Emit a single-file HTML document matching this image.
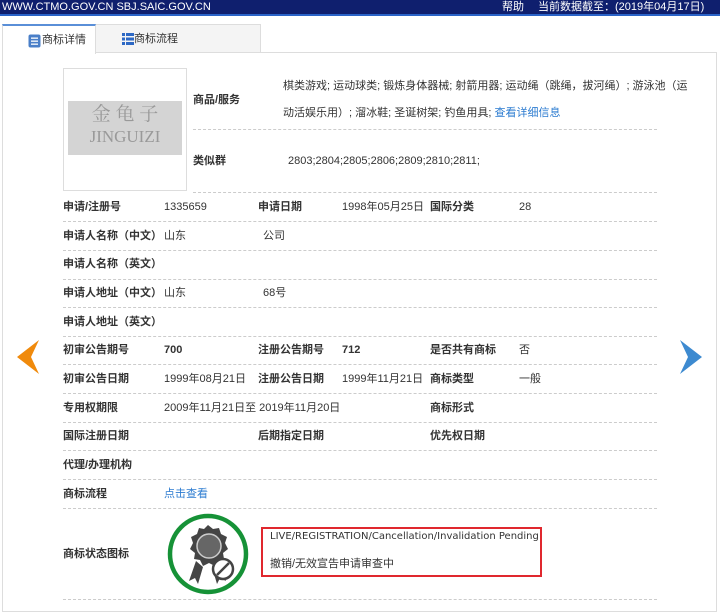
<!DOCTYPE html>
<html><head><meta charset="utf-8"><style>
*{margin:0;padding:0;box-sizing:border-box}
body{width:720px;height:603px;background:#fff;font-family:"Liberation Sans","Noto Sans CJK SC",sans-serif;font-size:11px;color:#333;position:relative;overflow:hidden}
.hdr{position:absolute;left:0;top:0;width:720px;height:16px;background:#0f1f6e;border-bottom:2px solid #2a63c8;color:#fff;font-size:11px;line-height:14px}
.abs{position:absolute;white-space:nowrap;line-height:14px}
.tab{position:absolute;top:24px;height:29px;border:1px solid #ddd;border-bottom:none;line-height:28px;font-size:11px}
.tab .abs{line-height:28px}
.box{position:absolute;left:2px;top:52px;width:715px;height:560px;border:1px solid #ddd}
.dash{position:absolute;left:63px;width:594px;border-top:1px dashed #ccc}
.b{font-weight:bold;color:#333}
.lk{color:#2b7bd0}
</style></head><body>
<div class="hdr"><span class="abs" style="left:2px;top:0">WWW.CTMO.GOV.CN SBJ.SAIC.GOV.CN</span><span class="abs" style="left:502px;top:0">帮助</span><span class="abs" style="left:538px;top:0">当前数据截至：(2019年04月17日)</span></div>
<div class="tab" style="left:2px;width:94px;background:#fff;border-top:2px solid #5a8fd8;z-index:2;height:30px"><svg style="position:absolute;left:25px;top:8px" width="13" height="14"><rect x="0.5" y="0.5" width="12" height="13" rx="2" fill="#4a7fc8"/><rect x="3" y="3.5" width="7" height="1.3" fill="#fff"/><rect x="3" y="6.5" width="7" height="1.3" fill="#fff"/><rect x="3" y="9.5" width="7" height="1.3" fill="#fff"/></svg><span class="abs" style="left:39px;top:0">商标详情</span></div>
<div class="tab" style="left:95px;width:166px;background:#f4f4f4"><svg style="position:absolute;left:26px;top:8px" width="12" height="12" fill="#2d68c4"><rect x="0" y="0" width="3" height="3"/><rect x="4" y="0" width="8" height="3"/><rect x="0" y="4.5" width="3" height="3"/><rect x="4" y="4.5" width="8" height="3"/><rect x="0" y="9" width="3" height="3"/><rect x="4" y="9" width="8" height="3"/></svg><span class="abs" style="left:38px;top:0">商标流程</span></div>
<div class="box"></div>
<div class="abs" style="left:63px;top:68px;width:124px;height:123px;border:1px solid #ddd"></div>
<div class="abs" style="left:68px;top:101px;width:114px;height:54px;background:#d4d4d4;color:#999;font-family:'Liberation Serif','Noto Serif CJK SC',serif;text-align:center;line-height:22px;font-size:19px;padding-top:3px">金 龟 子<br><span style="font-size:17px">JINGUIZI</span></div>
<span class="abs b" style="left:193px;top:93px">商品/服务</span>
<span class="abs" style="left:283px;top:79px">棋类游戏; 运动球类; 锻炼身体器械; 射箭用器; 运动绳（跳绳，拔河绳）; 游泳池（运</span>
<span class="abs" style="left:283px;top:106px">动活娱乐用）; 溜冰鞋; 圣诞树架; 钓鱼用具; <span class="lk">查看详细信息</span></span>
<div class="dash" style="left:193px;width:464px;top:129px"></div>
<span class="abs b" style="left:193px;top:154px">类似群</span>
<span class="abs" style="left:288px;top:154px">2803;2804;2805;2806;2809;2810;2811;</span>
<div class="dash" style="left:193px;width:464px;top:192px"></div>

<span class="abs b" style="left:63px;top:200px">申请/注册号</span><span class="abs" style="left:164px;top:200px">1335659</span><span class="abs b" style="left:258px;top:200px">申请日期</span><span class="abs" style="left:342px;top:200px">1998年05月25日</span><span class="abs b" style="left:430px;top:200px">国际分类</span><span class="abs" style="left:519px;top:200px">28</span>
<div class="dash" style="top:221px"></div>
<span class="abs b" style="left:63px;top:229px">申请人名称（中文）</span><span class="abs" style="left:164px;top:229px">山东　　　　　　　公司</span>
<div class="dash" style="top:250px"></div>
<span class="abs b" style="left:63px;top:257px">申请人名称（英文）</span>
<div class="dash" style="top:279px"></div>
<span class="abs b" style="left:63px;top:286px">申请人地址（中文）</span><span class="abs" style="left:164px;top:286px">山东　　　　　　　68号</span>
<div class="dash" style="top:307px"></div>
<span class="abs b" style="left:63px;top:315px">申请人地址（英文）</span>
<div class="dash" style="top:336px"></div>
<span class="abs b" style="left:63px;top:343px">初审公告期号</span><span class="abs b" style="left:164px;top:343px">700</span><span class="abs b" style="left:258px;top:343px">注册公告期号</span><span class="abs b" style="left:342px;top:343px">712</span><span class="abs b" style="left:430px;top:343px">是否共有商标</span><span class="abs" style="left:519px;top:343px">否</span>
<div class="dash" style="top:364px"></div>
<span class="abs b" style="left:63px;top:372px">初审公告日期</span><span class="abs" style="left:164px;top:372px">1999年08月21日</span><span class="abs b" style="left:258px;top:372px">注册公告日期</span><span class="abs" style="left:342px;top:372px">1999年11月21日</span><span class="abs b" style="left:430px;top:372px">商标类型</span><span class="abs" style="left:519px;top:372px">一般</span>
<div class="dash" style="top:393px"></div>
<span class="abs b" style="left:63px;top:401px">专用权期限</span><span class="abs" style="left:164px;top:401px">2009年11月21日至 2019年11月20日</span><span class="abs b" style="left:430px;top:401px">商标形式</span>
<div class="dash" style="top:422px"></div>
<span class="abs b" style="left:63px;top:429px">国际注册日期</span><span class="abs b" style="left:258px;top:429px">后期指定日期</span><span class="abs b" style="left:430px;top:429px">优先权日期</span>
<div class="dash" style="top:450px"></div>
<span class="abs b" style="left:63px;top:458px">代理/办理机构</span>
<div class="dash" style="top:479px"></div>
<span class="abs b" style="left:63px;top:487px">商标流程</span><span class="abs lk" style="left:164px;top:487px">点击查看</span>
<div class="dash" style="top:508px"></div>
<span class="abs b" style="left:63px;top:547px">商标状态图标</span>
<svg class="abs" style="left:166px;top:513px" width="84" height="82"><circle cx="42" cy="41" r="38" fill="#fff" stroke="#169237" stroke-width="4.5"/>
<path d="M30 48 L23 68 L29 65 L32 71 L37 54Z M46 54 L51 71 L54 65 L60 68 L53 48Z" fill="#444"/>
<polygon points="42,12 47,16 53,15 55,21 61,24 59,30 62,36 57,40 58,46 52,47 49,53 43,50 37,53 34,47 28,46 29,40 24,36 27,30 25,24 31,21 33,15 38,16" fill="#444"/>
<circle cx="43" cy="33" r="12" fill="#666" stroke="#ccc" stroke-width="1.5"/>
<circle cx="57" cy="56" r="10" fill="#fff" stroke="#444" stroke-width="2.5"/><path d="M51 62 L63 50" stroke="#444" stroke-width="2.5"/></svg>
<div class="abs" style="left:261px;top:527px;width:281px;height:50px;border:2px solid #e0282e"></div>
<span class="abs" style="left:270px;top:530px;font-family:'DejaVu Sans',sans-serif;font-size:10px">LIVE/REGISTRATION/Cancellation/Invalidation Pending</span>
<span class="abs" style="left:270px;top:557px">撤销/无效宣告申请审查中</span>
<div class="dash" style="top:599px"></div>
<svg class="abs" style="left:17px;top:340px" width="24" height="34"><polygon points="22,0 0,17 22,34 14,17" fill="#f08a0c"/></svg>
<svg class="abs" style="left:678px;top:340px" width="24" height="34"><polygon points="2,0 24,17 2,34 10,17" fill="#3d8ad0"/></svg>
</body></html>
